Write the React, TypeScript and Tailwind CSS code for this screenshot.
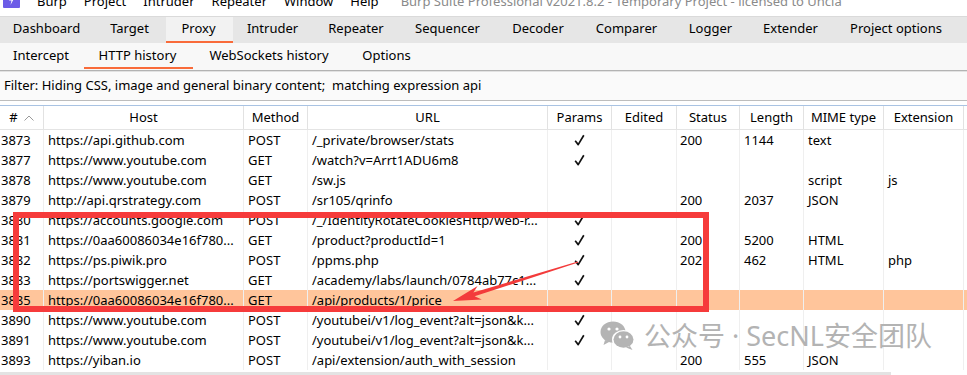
import React from 'react';

const menus = ['Burp', 'Project', 'Intruder', 'Repeater', 'Window', 'Help'];

const tabs = [
    { label: 'Dashboard', w: 'w-[95px]' },
    { label: 'Target', w: 'w-[71px]' },
    { label: 'Proxy', w: 'w-[67px]', active: true },
    { label: 'Intruder', w: 'w-[81px]' },
    { label: 'Repeater', w: 'w-[86px]' },
    { label: 'Sequencer', w: 'w-[97px]' },
    { label: 'Decoder', w: 'w-[84px]' },
    { label: 'Comparer', w: 'w-[93px]' },
    { label: 'Logger', w: 'w-[75px]' },
    { label: 'Extender', w: 'w-[85px]' },
    { label: 'Project options', w: 'w-[126px]' },
];

const subTabs = [
    { label: 'Intercept', w: 'w-[84px]' },
    { label: 'HTTP history', w: 'w-[109px]', active: true },
    { label: 'WebSockets history', w: 'w-[154px]' },
    { label: 'Options', w: 'w-[81px]' },
];

// column widths match the reference grid lines
const cols = [
    { key: 'id', title: '#', w: 'w-[44px]' },
    { key: 'host', title: 'Host', w: 'w-[200px]' },
    { key: 'method', title: 'Method', w: 'w-[64px]' },
    { key: 'url', title: 'URL', w: 'w-[240px]' },
    { key: 'params', title: 'Params', w: 'w-[64px]' },
    { key: 'edited', title: 'Edited', w: 'w-[65px]' },
    { key: 'status', title: 'Status', w: 'w-[63px]' },
    { key: 'length', title: 'Length', w: 'w-[64px]' },
    { key: 'mime', title: 'MIME type', w: 'w-[80px]' },
    { key: 'ext', title: 'Extension', w: 'w-[80px]' },
];

type Row = {
    id: string;
    host: string;
    method: string;
    url: string;
    params?: boolean;
    status?: string;
    length?: string;
    mime?: string;
    ext?: string;
    hl?: boolean;
};

const rows: Row[] = [
    { id: '3873', host: 'https://api.github.com', method: 'POST', url: '/_private/browser/stats', params: true, status: '200', length: '1144', mime: 'text' },
    { id: '3877', host: 'https://www.youtube.com', method: 'GET', url: '/watch?v=Arrt1ADU6m8', params: true },
    { id: '3878', host: 'https://www.youtube.com', method: 'GET', url: '/sw.js', mime: 'script', ext: 'js' },
    { id: '3879', host: 'http://api.qrstrategy.com', method: 'POST', url: '/sr105/qrinfo', status: '200', length: '2037', mime: 'JSON' },
    { id: '3880', host: 'https://accounts.google.com', method: 'POST', url: '/_/IdentityRotateCookiesHttp/web-r...', params: true },
    { id: '3881', host: 'https://0aa60086034e16f780...', method: 'GET', url: '/product?productId=1', params: true, status: '200', length: '5200', mime: 'HTML' },
    { id: '3882', host: 'https://ps.piwik.pro', method: 'POST', url: '/ppms.php', params: true, status: '202', length: '462', mime: 'HTML', ext: 'php' },
    { id: '3883', host: 'https://portswigger.net', method: 'GET', url: '/academy/labs/launch/0784ab77c1...', params: true },
    { id: '3885', host: 'https://0aa60086034e16f780...', method: 'GET', url: '/api/products/1/price', hl: true },
    { id: '3890', host: 'https://www.youtube.com', method: 'POST', url: '/youtubei/v1/log_event?alt=json&k...', params: true },
    { id: '3891', host: 'https://www.youtube.com', method: 'POST', url: '/youtubei/v1/log_event?alt=json&k...', params: true },
    { id: '3893', host: 'https://yiban.io', method: 'POST', url: '/api/extension/auth_with_session', status: '200', length: '555', mime: 'JSON' },
];

const Check = () => (
    <svg width="11" height="12" viewBox="0 0 11 12" className="mx-auto">
        <path d="M1.2 6.8 L4.2 10.6 L9.8 1.2" fill="none" stroke="#111" strokeWidth="1.7" strokeLinejoin="round" />
    </svg>
);

const BurpLogo = () => (
    <svg width="17" height="17" viewBox="0 0 17 17">
        <rect width="17" height="17" rx="1" fill="#6c5ce7" />
        <path d="M9.5 3 L6 9.5 L8.5 9.5 L7.5 14 L11 7.5 L8.5 7.5 Z" fill="#fff" />
    </svg>
);

const WeChat = () => (
    <svg width="36" height="30" viewBox="0 0 36 30">
        <ellipse cx="13" cy="11" rx="12.5" ry="10.5" fill="#b4b4b4" />
        <path d="M5 19 L3.5 24 L10 20.5 Z" fill="#b4b4b4" />
        <circle cx="9" cy="8" r="1.6" fill="#fff" />
        <circle cx="17" cy="8" r="1.6" fill="#fff" />
        <ellipse cx="23.5" cy="18.5" rx="11.5" ry="9.5" fill="#fff" />
        <ellipse cx="23.5" cy="18.5" rx="10" ry="8.3" fill="#b4b4b4" />
        <path d="M30 25 L32.5 29 L26 26.5 Z" fill="#b4b4b4" />
        <circle cx="20" cy="16" r="1.4" fill="#fff" />
        <circle cx="27" cy="16" r="1.4" fill="#fff" />
    </svg>
);

export default function App() {
    return (
        <div className="relative w-[967px] h-[375px] overflow-hidden bg-white text-black font-['Noto_Sans',sans-serif]">
            {/* window title bar, mostly scrolled off */}
            <div className="h-[16px] overflow-hidden flex items-start border-b border-[#dadada] box-content">
                <div className="-mt-[9px] ml-[3px]"><BurpLogo /></div>
                <div className="-mt-[9px] ml-[17px] flex gap-[17px] text-[13px] leading-[20px]">
                    {menus.map((m) => <span key={m}>{m}</span>)}
                </div>
                <span className="-mt-[9px] ml-[22px] text-[13px] leading-[20px] text-[#8a8a8a] whitespace-nowrap">
                    Burp Suite Professional v2021.8.2 - Temporary Project - licensed to Uncia
                </span>
            </div>

            {/* main tabs */}
            <div className="h-[26px] flex bg-[#e6e6e6] text-[13px]">
                {tabs.map((t) => (
                    <div
                        key={t.label}
                        className={`${t.w} shrink-0 flex items-center justify-center whitespace-nowrap pr-[2px] ${t.active ? 'bg-[#f2f2f2] border-b-2 border-[#f96b3a]' : 'border-b-2 border-transparent'}`}
                    >
                        {t.label}
                    </div>
                ))}
            </div>

            {/* sub tabs */}
            <div className="h-[27px] flex bg-[#f8f8f8] text-[13px]">
                {subTabs.map((t) => (
                    <div key={t.label} className={`${t.w} shrink-0 flex flex-col`}>
                        <div className="flex-1 flex items-center justify-center whitespace-nowrap pr-[2px] pt-[1px]">{t.label}</div>
                        <div className={`h-[2px] mb-[1px] ${t.active ? 'bg-[#f96b3a]' : ''}`} />
                    </div>
                ))}
            </div>
            <div className="h-px bg-[#b3b3b3]" />
            <div className="h-px bg-[#e2e2e2]" />

            {/* filter */}
            <div className="h-[28px] flex items-center px-[4px] bg-[#fafafa] text-[13px] whitespace-pre border-b border-[#bdbdbd] box-content">
                Filter: Hiding CSS, image and general binary content;  matching expression api
            </div>
            <div className="h-[4px] bg-white" />
            <div className="h-px bg-[#a9c3e3]" />

            {/* table header */}
            <div className="h-[23px] flex text-[13px] border-b border-[#e4e4e4] box-content">
                {cols.map((c) => (
                    <div key={c.key} className={`${c.w} shrink-0 border-r border-[#e2e2e2] flex items-center justify-center gap-[6px]`}>
                        <span>{c.title}</span>
                        {c.key === 'id' && (
                            <svg width="10" height="6" viewBox="0 0 10 6">
                                <path d="M0.5 5.5 L5 1 L9.5 5.5" fill="none" stroke="#9a9a9a" strokeWidth="1" />
                            </svg>
                        )}
                    </div>
                ))}
            </div>

            {/* rows */}
            <div className="text-[13px]">
                {rows.map((r) => (
                    <div key={r.id} className={`h-[20px] flex leading-[20px] ${r.hl ? 'bg-[#ffc59b]' : ''}`}>
                        <div className="w-[44px] shrink-0 border-r border-[#efefef] pl-[1px]">{r.id}</div>
                        <div className="w-[200px] shrink-0 border-r border-[#efefef] px-[4px] overflow-hidden whitespace-nowrap">{r.host}</div>
                        <div className="w-[64px] shrink-0 border-r border-[#efefef] px-[4px]">{r.method}</div>
                        <div className="w-[240px] shrink-0 border-r border-[#efefef] px-[4px] overflow-hidden whitespace-nowrap">{r.url}</div>
                        <div className="w-[64px] shrink-0 border-r border-[#efefef] flex items-center">{r.params && <Check />}</div>
                        <div className="w-[65px] shrink-0 border-r border-[#efefef]" />
                        <div className="w-[63px] shrink-0 border-r border-[#efefef] px-[3px]">{r.status}</div>
                        <div className="w-[64px] shrink-0 border-r border-[#efefef] px-[4px]">{r.length}</div>
                        <div className="w-[80px] shrink-0 border-r border-[#efefef] px-[4px]">{r.mime}</div>
                        <div className="w-[80px] shrink-0 border-r border-[#efefef] px-[4px]">{r.ext}</div>
                    </div>
                ))}
            </div>
            <div className="h-[5px] flex">
                <div className="w-[891px] bg-[#e3e3e3] mt-[2px]" />
            </div>

            {/* annotation overlay */}
            <div className="absolute left-[13px] top-[212px] w-[696px] h-[100px] border-[6px] border-[#f63b3b]" />
            <svg className="absolute left-0 top-0" width="967" height="375" viewBox="0 0 967 375">
                <polygon
                    points="577.8,261.5 473.4,292.5 477.6,286 453,301 481.8,299.4 474.6,296.3 578.2,262.5"
                    fill="#f33b3b"
                />
            </svg>

            {/* watermark */}
            <div className="absolute left-[600px] top-[321px] flex items-center gap-[8px] text-[#b3b3b3] text-[27px] leading-[28px] font-['Noto_Sans','Noto_Sans_CJK_SC',sans-serif]">
                <WeChat />
                <span>公众号 · SecNL安全团队</span>
            </div>
        </div>
    );
}
